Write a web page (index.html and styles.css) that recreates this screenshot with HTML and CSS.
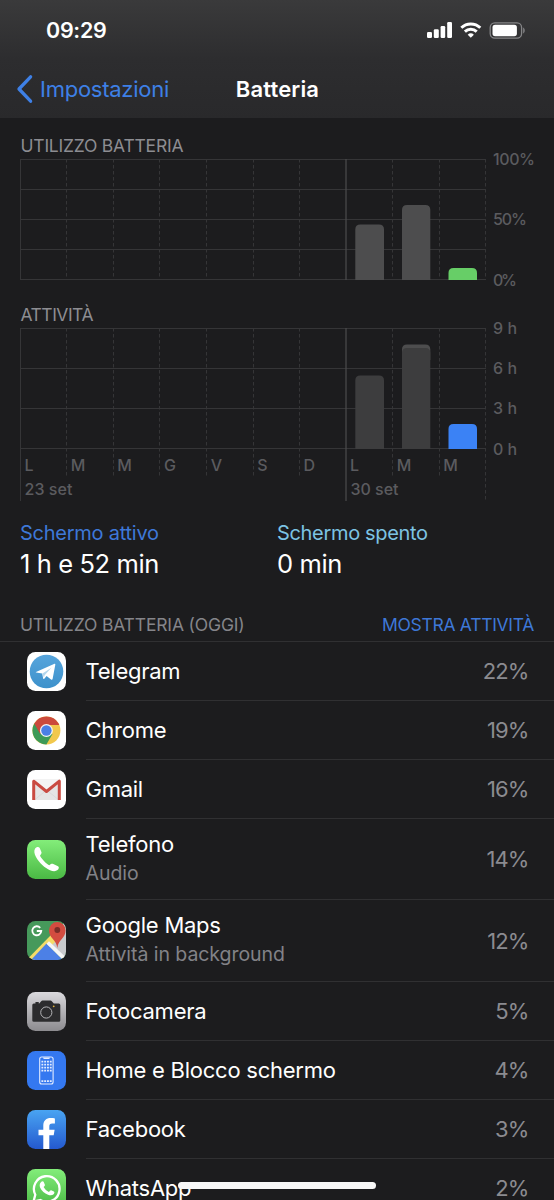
FILE: index.html
```html
<!DOCTYPE html>
<html lang="it">
<head>
<meta charset="utf-8">
<title>Batteria</title>
<link rel="stylesheet" href="styles.css">
</head>
<body>
<div class="screen">
  <header class="header">
    <div class="status">
      <span class="clock">09:29</span>
      <svg class="status-icons" width="98" height="18" viewBox="0 0 98 18">
        <g fill="#fff">
          <rect x="0" y="10" width="5" height="6" rx="1.2"/>
          <rect x="6.8" y="7.2" width="5" height="8.8" rx="1.2"/>
          <rect x="13.6" y="4" width="4.6" height="12" rx="1.2"/>
          <rect x="20.2" y="0" width="4.8" height="16" rx="1.2"/>
        </g>
        <g fill="none" stroke="#fff" stroke-width="2.9">
          <path d="M34.3 5.8a13.6 13.6 0 0 1 19 0"/>
          <path d="M37.9 9.6a8.4 8.4 0 0 1 11.8 0"/>
        </g>
        <path d="M43.8 15.8l-3.1-3.1a4.5 4.5 0 0 1 6.2 0z" fill="#fff"/>
        <rect x="63.2" y="0.8" width="31.4" height="15.4" rx="4.6" fill="none" stroke="#858587" stroke-width="1.3"/>
        <rect x="65.5" y="2.8" width="24.4" height="11.4" rx="2.6" fill="#fff"/>
        <path d="M96.2 5.6c2 1 2 4.800 0 5.800z" fill="#858587"/>
      </svg>
    </div>
    <nav class="nav">
      <a class="back"><svg class="chevron" width="18" height="30" viewBox="0 0 18 30"><path d="M14.600 2.800L3 15l11.600 12.200" fill="none" stroke="#3e80e6" stroke-width="3.300" stroke-linecap="round" stroke-linejoin="round"/></svg><span class="back-label">Impostazioni</span></a>
      <h1 class="title">Batteria</h1>
    </nav>
  </header>

  <main>
    <svg class="charts" width="554" height="392" viewBox="0 118 554 392">
      <g class="heading">
        <text x="20.500" y="152" textLength="163">UTILIZZO BATTERIA</text>
        <text x="20.500" y="321" textLength="73">ATTIVITÀ</text>
      </g>
      <path class="grid" d="M20 159.500H486M20 189.500H486M20 219.500H486M20 249.500H486M20 279.500H486M20.500 159V280M20 328.500H486M20 368.500H486M20 408.500H486M20 448.500H486M20.500 328V501"/>
      <path class="grid dashed" d="M66.500 159V280M113.500 159V280M159.500 159V280M206.500 159V280M253.500 159V280M299.500 159V280M392.500 159V280M439.500 159V280M485.500 159V280M66.500 328V478M113.500 328V478M159.500 328V478M206.500 328V478M253.500 328V478M299.500 328V478M392.500 328V478M439.500 328V478M485.500 328V501"/>
      <path class="grid week" d="M346 159V280M346 328V501"/>
      <g fill="#4d4d4e">
        <path d="M355.300 280V229.500q0-5 5-5H379q5 0 5 5V280z"/>
        <path d="M402 280V210q0-5 5-5h18.300q5 0 5 5v70z"/>
        <path d="M402 360V349.500q0-5 5-5h18.300q5 0 5 5V360z"/>
      </g>
      <g fill="#3d3d3e">
        <path d="M355.300 449V380.500q0-5 5-5H379q5 0 5 5V449z"/>
        <path d="M402 449V353q0-5 5-5h18.300q5 0 5 5v96z"/>
      </g>
      <path fill="#67ce67" d="M448.500 280V273q0-5 5-5H472q5 0 5 5v7z"/>
      <path fill="#3b82f5" d="M448.500 449V429q0-5 5-5H472q5 0 5 5v20z"/>
      <g class="axis">
        <text x="493" y="165.300" textLength="42">100%</text>
        <text x="493" y="225.300" textLength="34">50%</text>
        <text x="493" y="285.800" textLength="24">0%</text>
        <text x="493" y="334" textLength="24">9 h</text>
        <text x="493" y="374.300" textLength="24">6 h</text>
        <text x="493" y="414.300" textLength="24">3 h</text>
        <text x="493" y="454.500" textLength="24">0 h</text>
        <text x="24.500" y="471">L</text><text x="70.800" y="471">M</text><text x="117.300" y="471">M</text><text x="164" y="471">G</text><text x="210.800" y="471">V</text><text x="257.300" y="471">S</text><text x="303.500" y="471">D</text><text x="350" y="471">L</text><text x="396.800" y="471">M</text><text x="443.300" y="471">M</text>
        <text x="24.500" y="495.300" textLength="48">23 set</text>
        <text x="350.500" y="495.300" textLength="48">30 set</text>
      </g>
    </svg>

    <section class="totals">
      <div class="total"><div class="total-label on">Schermo attivo</div><div class="total-value">1 h e 52 min</div></div>
      <div class="total"><div class="total-label off">Schermo spento</div><div class="total-value">0 min</div></div>
    </section>

    <div class="list-head"><span class="list-title">UTILIZZO BATTERIA (OGGI)</span><a class="toggle">MOSTRA ATTIVITÀ</a></div>

    <ul class="apps">
      <li class="app">
        <svg class="icon" viewBox="0 0 39 39"><defs><linearGradient id="tg" x2="0" y2="1"><stop stop-color="#57a5dc"/><stop offset="1" stop-color="#3d91cb"/></linearGradient></defs><rect width="39" height="39" rx="8.500" fill="#fff"/><circle cx="19.500" cy="19.500" r="16.800" fill="url(#tg)"/><path d="M9 20L27.500 11.800q1-.3.800.9L25.600 27q-.4 1.300-1.600.5L19.600 24l-2.300 2.800q-1 .7-1.200-.5l-.9-4.700-5.900-1q-1.100-.2-.3-.6z" fill="#fff"/><path d="M15.400 21.500l9-5.800-6.800 7.500-.7 2.600z" fill="#b5d7ed"/></svg>
        <div class="body"><div class="name">Telegram</div><div class="pct">22%</div></div></li>
      <li class="app">
        <svg class="icon" viewBox="0 0 39 39"><rect width="39" height="39" rx="8.500" fill="#fff"/><circle cx="19.400" cy="19.500" r="14" fill="#f2c84c"/><path d="M19.400 19.500L7.300 12.500A14 14 0 0 0 19.400 33.500L25.500 23z" fill="#3d9a57"/><path d="M7.300 12.500a14 14 0 0 1 24.300 0l.6 1.500H19.400l-6.200 9z" fill="#cb4a3c"/><circle cx="19.400" cy="19.500" r="6.500" fill="#f4f4f2"/><circle cx="19.400" cy="19.500" r="5.200" fill="#4a7fe5"/></svg>
        <div class="body"><div class="name">Chrome</div><div class="pct">19%</div></div></li>
      <li class="app">
        <svg class="icon" viewBox="0 0 39 39"><rect width="39" height="39" rx="8.500" fill="#fff"/><rect x="6" y="9.500" width="27" height="20.500" rx="1.500" fill="#e5e5e5"/><path d="M6 9.500h27L19.500 20z" fill="#f4f4f4"/><path d="M8 29.500L19.500 20 32 30" fill="none" stroke="#d2d2d2" stroke-width=".6"/><path d="M6.700 30V11.200L19.500 21.500 32.300 11.200V30" fill="none" stroke="#ca4b42" stroke-width="3" stroke-linejoin="round"/></svg>
        <div class="body"><div class="name">Gmail</div><div class="pct">16%</div></div></li>
      <li class="app phone">
        <svg class="icon" viewBox="0 0 39 39"><defs><linearGradient id="gr" x2="0" y2="1"><stop stop-color="#83ed7a"/><stop offset="1" stop-color="#4ab944"/></linearGradient></defs><rect width="39" height="39" rx="8.500" fill="url(#gr)"/><path d="M8 8.800C9 7 11.700 6.400 12.700 8l1.700 4c.5 1.200-.2 2-1.300 3.300-.5 1.600 7.300 10 9.300 9.900 1.700-1.500 2.600-1.700 3.900-1.200l4.700 2.200c1.500 1 .8 2.700-.5 3.900-1.600 1.500-4.300 1.500-7.500.2-5-2.100-10.800-7.200-14-13.200-1.600-3.200-2.300-6.200-1-8.300z" fill="#fff"/></svg>
        <div class="body"><div class="labels"><div class="name">Telefono</div><div class="detail">Audio</div></div><div class="pct">14%</div></div></li>
      <li class="app maps">
        <svg class="icon" viewBox="0 0 39 39"><defs><clipPath id="round"><rect width="39" height="39" rx="8.500"/></clipPath></defs><g clip-path="url(#round)"><rect width="39" height="39" fill="#46995b"/><path d="M39 0v39L19 20z" fill="#c9cacd"/><path d="M0 38.500L24 14l5 6L10 39H0z" fill="#f4dc68"/><path d="M4 39L19.500 22.500 36 39z" fill="#4c80e6"/><path d="M19.500 22.800l2.500-2.600L40 37.500V41h-2z" fill="#f5f5f5"/><path d="M30.300 27c-.6-4.200-2-6-4.500-9C23.500 15.400 22 13 22 9.300a8.300 8.300 0 0 1 16.600 0c0 3.700-1.500 6.100-3.800 8.700-2.500 3-3.900 4.800-4.500 9z" fill="#d34c40"/><circle cx="30.300" cy="9" r="2.900" fill="#7b2d28"/><path d="M13.200 6.800A4.500 4.500 0 1 0 14.300 10H9.800" fill="none" stroke="#fff" stroke-width="1.800"/></g></svg>
        <div class="body"><div class="labels"><div class="name">Google Maps</div><div class="detail">Attività in background</div></div><div class="pct">12%</div></div></li>
      <li class="app">
        <svg class="icon" viewBox="0 0 39 39"><defs><linearGradient id="ca" x2="0" y2="1"><stop stop-color="#dad9dd"/><stop offset="1" stop-color="#8c8b8f"/></linearGradient></defs><rect width="39" height="39" rx="8.500" fill="url(#ca)"/><path d="M5.300 13q0-1.500 1.500-1.500h5.400l2-2.200q.5-.7 1.300-.7h8q.8 0 1.300.7l2 2.200h5q1.500 0 1.500 1.500v15.500q0 1.300-1.500 1.300h-25q-1.500 0-1.500-1.300z" fill="#2c2c2e"/><rect x="8.300" y="10" width="3.600" height="2" rx=".7" fill="#2c2c2e"/><circle cx="19.300" cy="20.500" r="5.600" fill="none" stroke="#b5b5b8" stroke-width="1"/><circle cx="26.700" cy="14.300" r=".9" fill="#e0b23e"/></svg>
        <div class="body"><div class="name">Fotocamera</div><div class="pct">5%</div></div></li>
      <li class="app">
        <svg class="icon" viewBox="0 0 39 39"><rect width="39" height="39" rx="8.500" fill="#3478f0"/><rect x="12.700" y="6" width="13.400" height="27" rx="2" fill="none" stroke="#e2ecff" stroke-width="1.100"/><path d="M16 6.500h7q-.3 1.600-1.300 1.600h-4.400Q16.300 8.100 16 6.500z" fill="#e2ecff"/><path d="M14.400 10.700h10.400M14.400 13.700h10.400M14.400 16.700h10.400M14.400 19.700h10.400M14.400 30.200h10.400" stroke="#e2ecff" stroke-width="1.800" stroke-dasharray="1.900 .9"/></svg>
        <div class="body"><div class="name">Home e Blocco schermo</div><div class="pct">4%</div></div></li>
      <li class="app">
        <svg class="icon" viewBox="0 0 39 39"><defs><linearGradient id="fb" x2="0" y2="1"><stop stop-color="#49a4f2"/><stop offset="1" stop-color="#2459cf"/></linearGradient></defs><rect width="39" height="39" rx="8.500" fill="url(#fb)"/><path d="M16.300 39V25.300h-4.800v-5.500h4.800v-4.200c0-5 3-7.500 7.400-7.500 1.600 0 3.200.1 4.200.3v5h-2.600c-2.400 0-3 1.300-3 3v3.400h5.300l-.9 5.500h-4.400V39z" fill="#fff"/></svg>
        <div class="body"><div class="name">Facebook</div><div class="pct">3%</div></div></li>
      <li class="app">
        <svg class="icon" viewBox="0 0 39 39"><rect width="39" height="39" rx="8.500" fill="url(#gr)"/><path d="M6.500 32.500l1.800-6.800A12.800 12.800 0 1 1 13.300 31z" fill="none" stroke="#fff" stroke-width="2.300" stroke-linejoin="round"/><path d="M14.300 12.800c.8-.8 2-.8 2.400.1l1.200 2.800c.3.700-.7 1.700-1.300 2.400 1.300 2.400 3 3.800 5.300 4.800.8-.8 1.500-2 2.300-1.700l2.700 1.300c.9.500.5 1.800-.3 2.700-1.300 1.300-3.400 1.400-5.600.5-3.400-1.300-6.300-4-7.800-7-1-2.200-.5-4.500 1.100-5.900z" fill="#fff"/></svg>
        <div class="body"><div class="name">WhatsApp</div><div class="pct">2%</div></div></li>
    </ul>
  </main>
  <div class="home-bar"></div>
</div>
</body>
</html>
```
FILE: styles.css
```css
* { box-sizing: border-box; margin: 0; padding: 0; }
body { background: #1c1c1e; }
.screen {
  position: relative;
  width: 554px;
  height: 1200px;
  overflow: hidden;
  background: #1c1c1e;
  color: #fff;
  font-family: Inter, "Liberation Sans", sans-serif;
}
.header { height: 118px; background: linear-gradient(#3a3a3b, #2d2d2f 50%, #29292b); }
.status { display: flex; justify-content: space-between; height: 60px; padding: 16px 29px 0 46px; }
.clock { font-size: 21.5px; font-weight: 600; line-height: 28px; letter-spacing: -0.3px; }
.status-icons { margin-top: 6px; }
.nav { display: grid; grid-template-columns: 1fr auto 1fr; align-items: center; height: 58px; padding: 0 14px 0 15px; }
.back { display: flex; align-items: center; gap: 7px; color: #3e80e6; font-size: 22px; line-height: 30px; letter-spacing: -0.25px; }
.chevron { margin-left: 1px; margin-right: -1px; }
.title { font-size: 22px; font-weight: 600; line-height: 30px; letter-spacing: 0.15px; margin-top: -1px; }
.charts { display: block; }
.heading { font-size: 17.5px; fill: #8d8d92; }
.axis { font-size: 16px; font-weight: 450; fill: #5b5b5f; }
.grid { fill: none; stroke: #353537; stroke-width: 1; }
.dashed { stroke-dasharray: 3.5 2.5; }
.week { stroke: #4b4b4d; stroke-width: 1.2; }
.totals { display: grid; grid-template-columns: 257px 1fr; padding: 10px 20px 0; height: 98px; }
.total-label { font-size: 20px; line-height: 27px; }
.on { color: #3e78d8; letter-spacing: -0.25px; }
.off { color: #7cc4e4; letter-spacing: -0.33px; }
.total-value { font-size: 25.500px; line-height: 34px; letter-spacing: -0.4px; }
.list-head { display: flex; justify-content: space-between; height: 34px; padding: 5px 20px 0; font-size: 17.5px; line-height: 24px; border-bottom: 1px solid #303032; }
.list-title { color: #85858a; letter-spacing: -0.16px; }
.toggle { color: #3e78d8; letter-spacing: -0.3px; }
.apps { list-style: none; }
.app { display: flex; align-items: center; height: 59px; padding-left: 26.500px; gap: 20px; }
.phone { height: 81px; }
.maps { height: 82px; }
.icon { flex: none; width: 39px; height: 39px; margin-top: -1px; }
.body { display: flex; flex: 1; align-items: center; justify-content: space-between; height: 100%; padding-right: 25.500px; border-bottom: 1px solid #303032; }
.name { font-size: 22px; line-height: 30px; letter-spacing: -0.25px; }
.labels .name { margin-top: -1px; line-height: 29px; }
.detail { color: #828287; font-size: 19.5px; line-height: 29px; letter-spacing: -0.05px; }
.pct { color: #8b8b90; font-size: 22px; line-height: 30px; letter-spacing: -0.9px; }
.home-bar { position: absolute; left: 178px; top: 1182px; width: 198px; height: 7px; border-radius: 4px; background: #f8f8f8; }
```
